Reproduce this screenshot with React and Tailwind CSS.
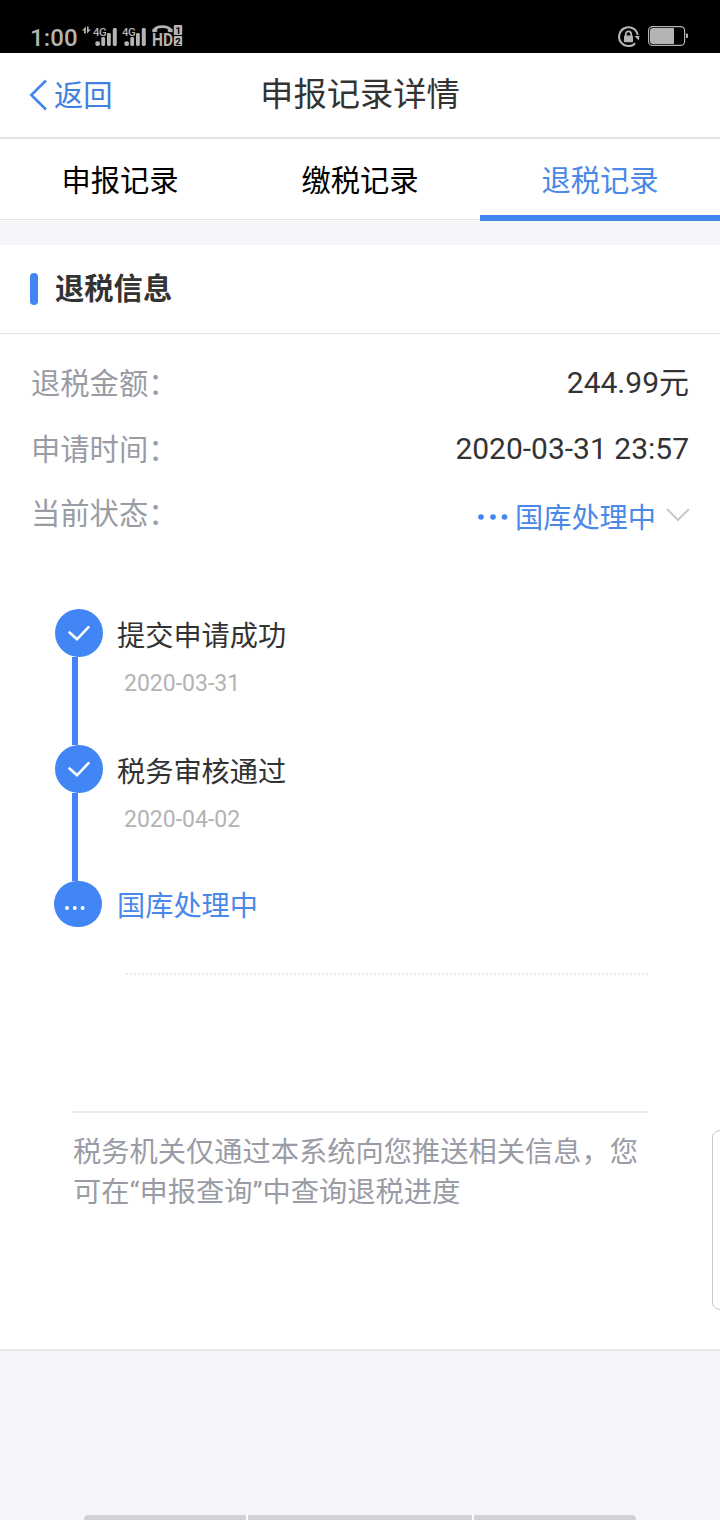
import React from 'react';

const tabs = [
  { label: '申报记录', active: false },
  { label: '缴税记录', active: false },
  { label: '退税记录', active: true }
];

const steps = [
  { title: '提交申请成功', date: '2020-03-31' },
  { title: '税务审核通过', date: '2020-04-02' }
];

// Signal strength with the 4G label above it
const Signal = ({ x }) => (
  <g fill="#b4b4b4">
    <text x={x} y="35.6" fontSize="11.3" fontWeight="500" letterSpacing="-0.3">4G</text>
    <rect x={x + 2.3} y="41.3" width="4.7" height="4.7" rx="2" />
    <rect x={x + 8.3} y="37" width="3.8" height="9" rx="1.4" />
    <rect x={x + 14} y="33" width="3.8" height="13" rx="1.4" />
    <rect x={x + 19.8} y="28" width="4" height="18" rx="1.4" />
  </g>
);

const StatusBar = () => (
  <div className="flex h-[53px] justify-between bg-black">
    <svg className="h-[53px] w-[200px]" viewBox="0 0 200 53" fill="#b4b4b4">
      <text x="30" y="46" fontSize="24" fontWeight="500" letterSpacing="0.1">1:00</text>
      {/* Data up / down arrows */}
      <path d="M82 30.5 L85.8 26.5 V33.5 H84 V30.5 Z" />
      <path d="M90.8 29.5 L87 33.5 V26.5 H88.6 V29.5 Z" />
      <Signal x={93} />
      <Signal x={122} />
      {/* HD voice on both cards */}
      <path d="M154 30.4 C156 25.4 168.5 25.4 171 30.4" fill="none" stroke="#b4b4b4" strokeWidth="2.8" />
      <path d="M152.2 29.2 L157.2 28 V31.8 L152.4 32.2 Z M172.8 29.2 L167.8 28 V31.8 L172.5 32.2 Z" />
      <text x="152" y="46" fontSize="18" fontWeight="700" textLength="21" lengthAdjust="spacingAndGlyphs">HD</text>
      <rect x="173.8" y="25" width="8.4" height="10" rx="1" />
      <rect x="173.8" y="36" width="8.4" height="10" rx="1" />
      <text x="175.6" y="33.6" fontSize="9.5" fontWeight="700" fill="#000">1</text>
      <text x="175.2" y="44.6" fontSize="9.5" fontWeight="700" fill="#000">2</text>
    </svg>
    <svg className="h-[53px] w-[120px]" viewBox="600 0 120 53" fill="none">
      <path d="M635.2 43.2 A9.4 9.4 0 1 1 637.7 35" stroke="#b4b4b4" strokeWidth="2" />
      <path d="M634.5 36 H639.4 L638.8 40.6 Z" fill="#b4b4b4" />
      <rect x="624" y="35.6" width="9" height="6.6" rx="0.8" fill="#b4b4b4" />
      <path d="M625.8 36 V34 A2.7 2.7 0 0 1 631.2 34 V36" stroke="#b4b4b4" strokeWidth="1.8" />
      <rect x="648.6" y="26.6" width="36" height="18.8" rx="4" stroke="#b4b4b4" strokeWidth="1.2" />
      <path d="M653 28 H674 V44 H653 A3 3 0 0 1 650 41 V31 A3 3 0 0 1 653 28 Z" fill="#b4b4b4" />
      <path d="M686 33.5 H687 A1 1 0 0 1 688 34.5 V37 A1 1 0 0 1 687 38 H686 Z" fill="#b4b4b4" />
    </svg>
  </div>
);

const Header = () => (
  <header className="grid h-[86px] grid-cols-[1fr_auto_1fr] items-center border-b-2 border-[#e3e3e3] bg-white">
    <button className="flex items-center pl-[29px] text-[#4080e0]">
      <svg className="h-8 w-[19px]" viewBox="0 0 19 32" fill="none" stroke="#4285ec" strokeWidth="2.6">
        <path d="M17 1.5 L2.3 16 L17 30.5" />
      </svg>
      <span className="pl-1.5 pt-0.5 text-[29.3px] leading-10">返回</span>
    </button>
    <h1 className="text-[33.3px] leading-[48px] text-[#333]">申报记录详情</h1>
  </header>
);

const Tabs = () => (
  <nav className="grid h-[82px] grid-cols-3 bg-white">
    {tabs.map((tab) => (
      <button
        key={tab.label}
        className={`text-[29.3px] ${
          tab.active
            ? 'border-b-6 border-[#4285f0] pt-[9px] text-[#4a88ea]'
            : 'mb-px border-b border-[#e3e3e3] pt-[5px] text-black'
        }`}
      >
        {tab.label}
      </button>
    ))}
  </nav>
);

const Row = ({ label, children }) => (
  <div className="flex h-[66px] justify-between">
    <span className="text-[29.3px] leading-[66px] text-[#999ca5]">{label}</span>
    <span className="text-[30px] leading-[64px] text-[#333]">{children}</span>
  </div>
);

const Timeline = () => (
  <div className="pl-[54px]">
    {steps.map((step) => (
      <div key={step.title} className="flex h-[136px]">
        <div className="flex w-[49px] flex-col pl-px">
          <div className="flex size-12 shrink-0 items-center justify-center rounded-full bg-[#4285f4]">
            <svg className="h-6 w-6" viewBox="0 0 24 24" fill="none" stroke="#fff" strokeWidth="2.6" strokeLinecap="round">
              <path d="M2.5 11.5 L10 18.3 L21.5 6.2" />
            </svg>
          </div>
          <div className="ml-[17px] w-1.5 grow bg-[#4285f4]" />
        </div>
        <div className="pl-3.5 pt-[7px]">
          <p className="text-[28.2px] leading-[42px] text-[#333]">{step.title}</p>
          <p className="pl-[7px] pt-[9px] text-[23px] leading-[34px] text-[#b3b3b3]">{step.date}</p>
        </div>
      </div>
    ))}
    <div className="flex h-[46px]">
      <div className="flex w-12 items-center justify-center rounded-full bg-[#4285f4]">
        <svg className="mr-[7px] mt-2 h-1.5 w-5" viewBox="0 0 20 6" fill="#fff">
          <circle cx="2" cy="3" r="2" />
          <circle cx="9.8" cy="3" r="2" />
          <circle cx="17.6" cy="3" r="2" />
        </svg>
      </div>
      <p className="pl-[15px] pt-[5px] text-[28.2px] leading-[42px] text-[#4a88ea]">国库处理中</p>
    </div>
  </div>
);

const App = () => {
  return (
    <div className="relative flex h-[1520px] w-[720px] flex-col overflow-hidden bg-[#f4f6fa] font-[Roboto,'Noto_Sans_CJK_SC',sans-serif]">
      <StatusBar />
      <Header />
      <Tabs />

      {/* Refund details */}
      <main className="mt-6 h-[1106px] border-b-2 border-[#e5e5ea] bg-white">
        <div className="flex h-[89px] items-center border-b border-[#e3e3e3] pl-[30px]">
          <span className="h-8 w-2 rounded-full bg-[#4285f4]" />
          <h2 className="pl-[17px] text-[29.3px] font-bold leading-10 text-[#333]">退税信息</h2>
        </div>

        <div className="flex h-[275px] flex-col pl-[31px] pr-[31px] pt-[17px]">
          <Row label="退税金额：">244.99元</Row>
          <Row label="申请时间：">2020-03-31 23:57</Row>
          <div className="flex justify-between">
            <span className="text-[29.3px] leading-[63px] text-[#999ca5]">当前状态：</span>
            <span className="-mr-px flex h-[72px] items-center text-[28.2px] text-[#4a88ea]">
              <svg className="mb-[5px] mr-[5px] h-1.5 w-8" viewBox="0 0 32 6" fill="#4285f0">
                <circle cx="3" cy="3" r="2.8" />
                <circle cx="15" cy="3" r="2.8" />
                <circle cx="26.5" cy="3" r="2.8" />
              </svg>
              国库处理中
              <svg className="mb-2 ml-2.5 h-3.5 w-6" viewBox="0 0 24 14" fill="none" stroke="#c8c8c8" strokeWidth="2">
                <path d="M1 1 L12 12 L23 1" />
              </svg>
            </span>
          </div>
        </div>

        <Timeline />

        <div className="ml-[126px] mt-[46px] w-[522px] border-t-2 border-dotted border-[#e8ecec]" />
        <div className="ml-[72px] mt-[136px] w-[576px] border-t-2 border-[#ebeeee] pl-px pt-5">
          <p className="text-[28.25px] leading-10 text-[#999ca5]">
            税务机关仅通过本系统向您推送相关信息，您可在“申报查询”中查询退税进度
          </p>
        </div>
      </main>

      {/* Edge panel handle */}
      <div className="absolute -right-3 top-[1130px] h-[180px] w-5 rounded-lg border border-[#c6c6c6] bg-white" />

      {/* Gesture bar */}
      <div className="mx-[84px] mt-auto flex h-[5px] gap-0.5 bg-white">
        <span className="w-[162px] rounded-tl-sm bg-[#d0d2d6]" />
        <span className="w-[224px] bg-[#d0d2d6]" />
        <span className="w-[162px] rounded-tr-sm bg-[#d0d2d6]" />
      </div>
    </div>
  );
};

export default App;
